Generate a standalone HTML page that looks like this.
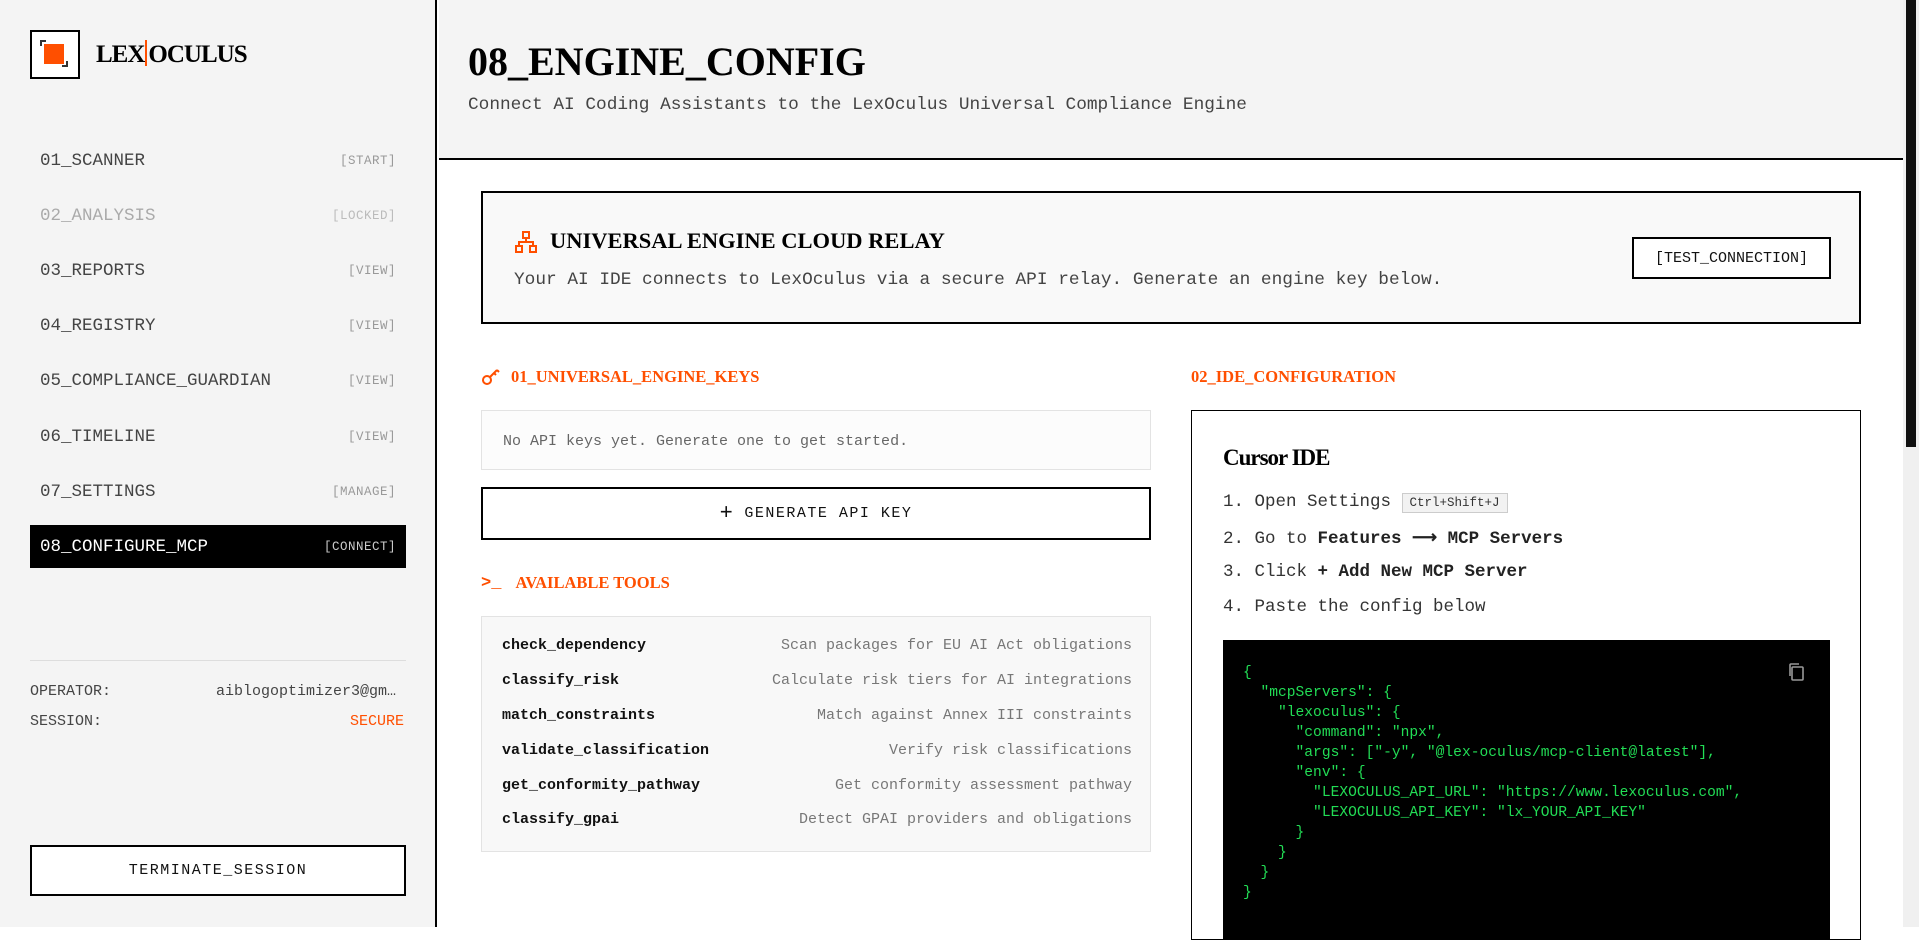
<!DOCTYPE html>
<html><head><meta charset="utf-8"><style>
*{box-sizing:border-box;margin:0;padding:0}
body{width:1919px;height:927px;overflow:hidden;background:#fff;font-family:"Liberation Mono",monospace;position:relative;color:#222}
.ser{font-family:"Liberation Serif",serif;font-weight:bold}
.abs{position:absolute}
#side{left:0;top:0;width:437px;height:927px;background:#f4f4f4;border-right:2px solid #000}
.logo{left:30px;top:30px;width:50px;height:49px;border:2px solid #000;background:#fff}
.nav{position:absolute;left:30px;width:376px;height:43px;padding:0 10px;display:flex;align-items:center;justify-content:space-between;font-size:17.5px;color:#444}
.nav span{font-size:12.5px;color:#999;letter-spacing:.5px}
.nav.act{background:#000;color:#fff}
.nav.act span{color:#ccc}
#head{left:439px;top:0;width:1464px;height:160px;background:#f4f4f4;border-bottom:2px solid #000}
.lbl{font-size:15px}
.btn{position:absolute;border:2px solid #000;display:flex;align-items:center;justify-content:center;background:#fff;color:#111}
.sect{position:absolute;font-size:16.5px;color:#ff4f00;display:flex;align-items:center;gap:10px}
.tool{position:absolute;left:502px;width:630px;display:flex;justify-content:space-between;font-size:15px}
.tool b{color:#111}
.tool i{font-style:normal;color:#777}
.step{position:absolute;left:1223px;font-size:17.5px;color:#333}
.step b{color:#222}
pre{font-family:"Liberation Mono",monospace;font-size:14.6px;line-height:20px;color:#22dd55}
</style></head><body>
<div id="side" class="abs">
 <div class="logo abs"><div class="abs" style="left:12px;top:12px;width:20px;height:20px;background:#ff4f00"></div>
 <div class="abs" style="left:8px;top:8px;width:6px;height:6px;border-left:2px solid #333;border-top:2px solid #333"></div>
 <div class="abs" style="left:30px;top:29px;width:6px;height:6px;border-right:2px solid #333;border-bottom:2px solid #333"></div></div>
 <div class="abs ser" style="left:96px;top:40px;font-size:25px;letter-spacing:-1px;color:#000">LEX<span style="display:inline-block;width:2px;height:26px;background:#ff4f00;vertical-align:-4px;margin:0 1px"></span>OCULUS</div>
 <div class="nav" style="top:139px">01_SCANNER<span>[START]</span></div>
 <div class="nav" style="top:194px;color:#aaa">02_ANALYSIS<span style="color:#bbb">[LOCKED]</span></div>
 <div class="nav" style="top:249px">03_REPORTS<span>[VIEW]</span></div>
 <div class="nav" style="top:304px">04_REGISTRY<span>[VIEW]</span></div>
 <div class="nav" style="top:359px">05_COMPLIANCE_GUARDIAN<span>[VIEW]</span></div>
 <div class="nav" style="top:415px">06_TIMELINE<span>[VIEW]</span></div>
 <div class="nav" style="top:470px">07_SETTINGS<span>[MANAGE]</span></div>
 <div class="nav act" style="top:525px">08_CONFIGURE_MCP<span>[CONNECT]</span></div>
 <div class="abs" style="left:30px;top:660px;width:376px;height:1px;background:#ddd"></div>
 <div class="abs lbl" style="left:30px;top:683px;color:#444">OPERATOR:</div>
 <div class="abs lbl" style="left:216px;top:683px;color:#444">aiblogoptimizer3@gm…</div>
 <div class="abs lbl" style="left:30px;top:713px;color:#444">SESSION:</div>
 <div class="abs lbl" style="left:350px;top:713px;color:#ff4f00">SECURE</div>
 <div class="btn" style="left:30px;top:845px;width:376px;height:51px;font-size:15px;letter-spacing:1.5px">TERMINATE_SESSION</div>
</div>
<div class="abs" style="left:1903px;top:0;width:16px;height:927px;background:#f0f0f0"><div class="abs" style="left:3px;top:0;width:10px;height:447px;background:#111"></div></div>
<div id="head" class="abs">
 <div class="abs ser" style="left:29px;top:38px;font-size:40px;color:#000">08_ENGINE_CONFIG</div>
 <div class="abs" style="left:29px;top:95px;font-size:17.8px;color:#444">Connect AI Coding Assistants to the LexOculus Universal Compliance Engine</div>
</div>
<div class="abs" style="left:481px;top:191px;width:1380px;height:133px;border:2px solid #000;background:#f9f9f9">
 <svg class="abs" style="left:31px;top:37px" width="24" height="24" viewBox="0 0 24 24" fill="none" stroke="#ff4f00" stroke-width="2"><rect x="9" y="2" width="6" height="6"/><rect x="2" y="16" width="6" height="6"/><rect x="16" y="16" width="6" height="6"/><path d="M12 8v4M5 16v-4h14v4"/></svg>
 <div class="abs ser" style="left:67px;top:35px;font-size:22.5px;color:#000">UNIVERSAL ENGINE CLOUD RELAY</div>
 <div class="abs" style="left:31px;top:77px;font-size:17.8px;color:#444">Your AI IDE connects to LexOculus via a secure API relay. Generate an engine key below.</div>
 <div class="btn" style="left:1149px;top:44px;width:199px;height:42px;font-size:15px">[TEST_CONNECTION]</div>
</div>
<div class="sect ser" style="left:481px;top:367px"><svg width="20" height="18" viewBox="0 0 20 18" fill="none" stroke="#ff4f00" stroke-width="2"><circle cx="6" cy="12" r="4"/><path d="M9 9l7-7M13 5l2 2M16 2l2 2"/></svg>01_UNIVERSAL_ENGINE_KEYS</div>
<div class="abs" style="left:481px;top:410px;width:670px;height:60px;border:1px solid #e3e3e3;background:#fcfcfc;font-size:15px;color:#666;padding:22px 0 0 21px">No API keys yet. Generate one to get started.</div>
<div class="btn" style="left:481px;top:487px;width:670px;height:53px;font-size:15px;letter-spacing:1.5px"><span style="font-size:22px;margin-right:10px">+</span>GENERATE API KEY</div>
<div class="sect ser" style="left:481px;top:573px"><span style="font-family:'Liberation Mono',monospace;font-weight:bold;font-size:17px">&gt;_</span>&nbsp;AVAILABLE TOOLS</div>
<div class="abs" style="left:481px;top:616px;width:670px;height:236px;border:1px solid #e3e3e3;background:#f8f8f8"></div>
<div class="tool" style="top:637px"><b>check_dependency</b><i>Scan packages for EU AI Act obligations</i></div>
<div class="tool" style="top:672px"><b>classify_risk</b><i>Calculate risk tiers for AI integrations</i></div>
<div class="tool" style="top:707px"><b>match_constraints</b><i>Match against Annex III constraints</i></div>
<div class="tool" style="top:742px"><b>validate_classification</b><i>Verify risk classifications</i></div>
<div class="tool" style="top:777px"><b>get_conformity_pathway</b><i>Get conformity assessment pathway</i></div>
<div class="tool" style="top:811px"><b>classify_gpai</b><i>Detect GPAI providers and obligations</i></div>
<div class="sect ser" style="left:1191px;top:367px">02_IDE_CONFIGURATION</div>
<div class="abs" style="left:1191px;top:410px;width:670px;height:530px;border:1px solid #000;background:#fff"></div>
<div class="abs ser" style="left:1223px;top:445px;font-size:23px;color:#000;letter-spacing:-1px">Cursor IDE</div>
<div class="step" style="top:492px">1. Open Settings <span style="font-size:12.5px;border:1px solid #ccc;background:#f2f2f2;padding:2px 7px;color:#333">Ctrl+Shift+J</span></div>
<div class="step" style="top:528px">2. Go to <b>Features ⟶ MCP Servers</b></div>
<div class="step" style="top:562px">3. Click <b>+ Add New MCP Server</b></div>
<div class="step" style="top:597px">4. Paste the config below</div>
<div class="abs" style="left:1223px;top:640px;width:607px;height:300px;background:#000">
<svg class="abs" style="left:564px;top:22px" width="18" height="20" viewBox="0 0 18 20" fill="none" stroke="#999" stroke-width="1.6"><rect x="5" y="5" width="11" height="13" rx="1"/><path d="M3 14V3a1 1 0 0 1 1-1h8"/></svg>
<pre class="abs" style="left:20px;top:23px">{
  "mcpServers": {
    "lexoculus": {
      "command": "npx",
      "args": ["-y", "@lex-oculus/mcp-client@latest"],
      "env": {
        "LEXOCULUS_API_URL": "https://www.lexoculus.com",
        "LEXOCULUS_API_KEY": "lx_YOUR_API_KEY"
      }
    }
  }
}</pre></div>
</body></html>
